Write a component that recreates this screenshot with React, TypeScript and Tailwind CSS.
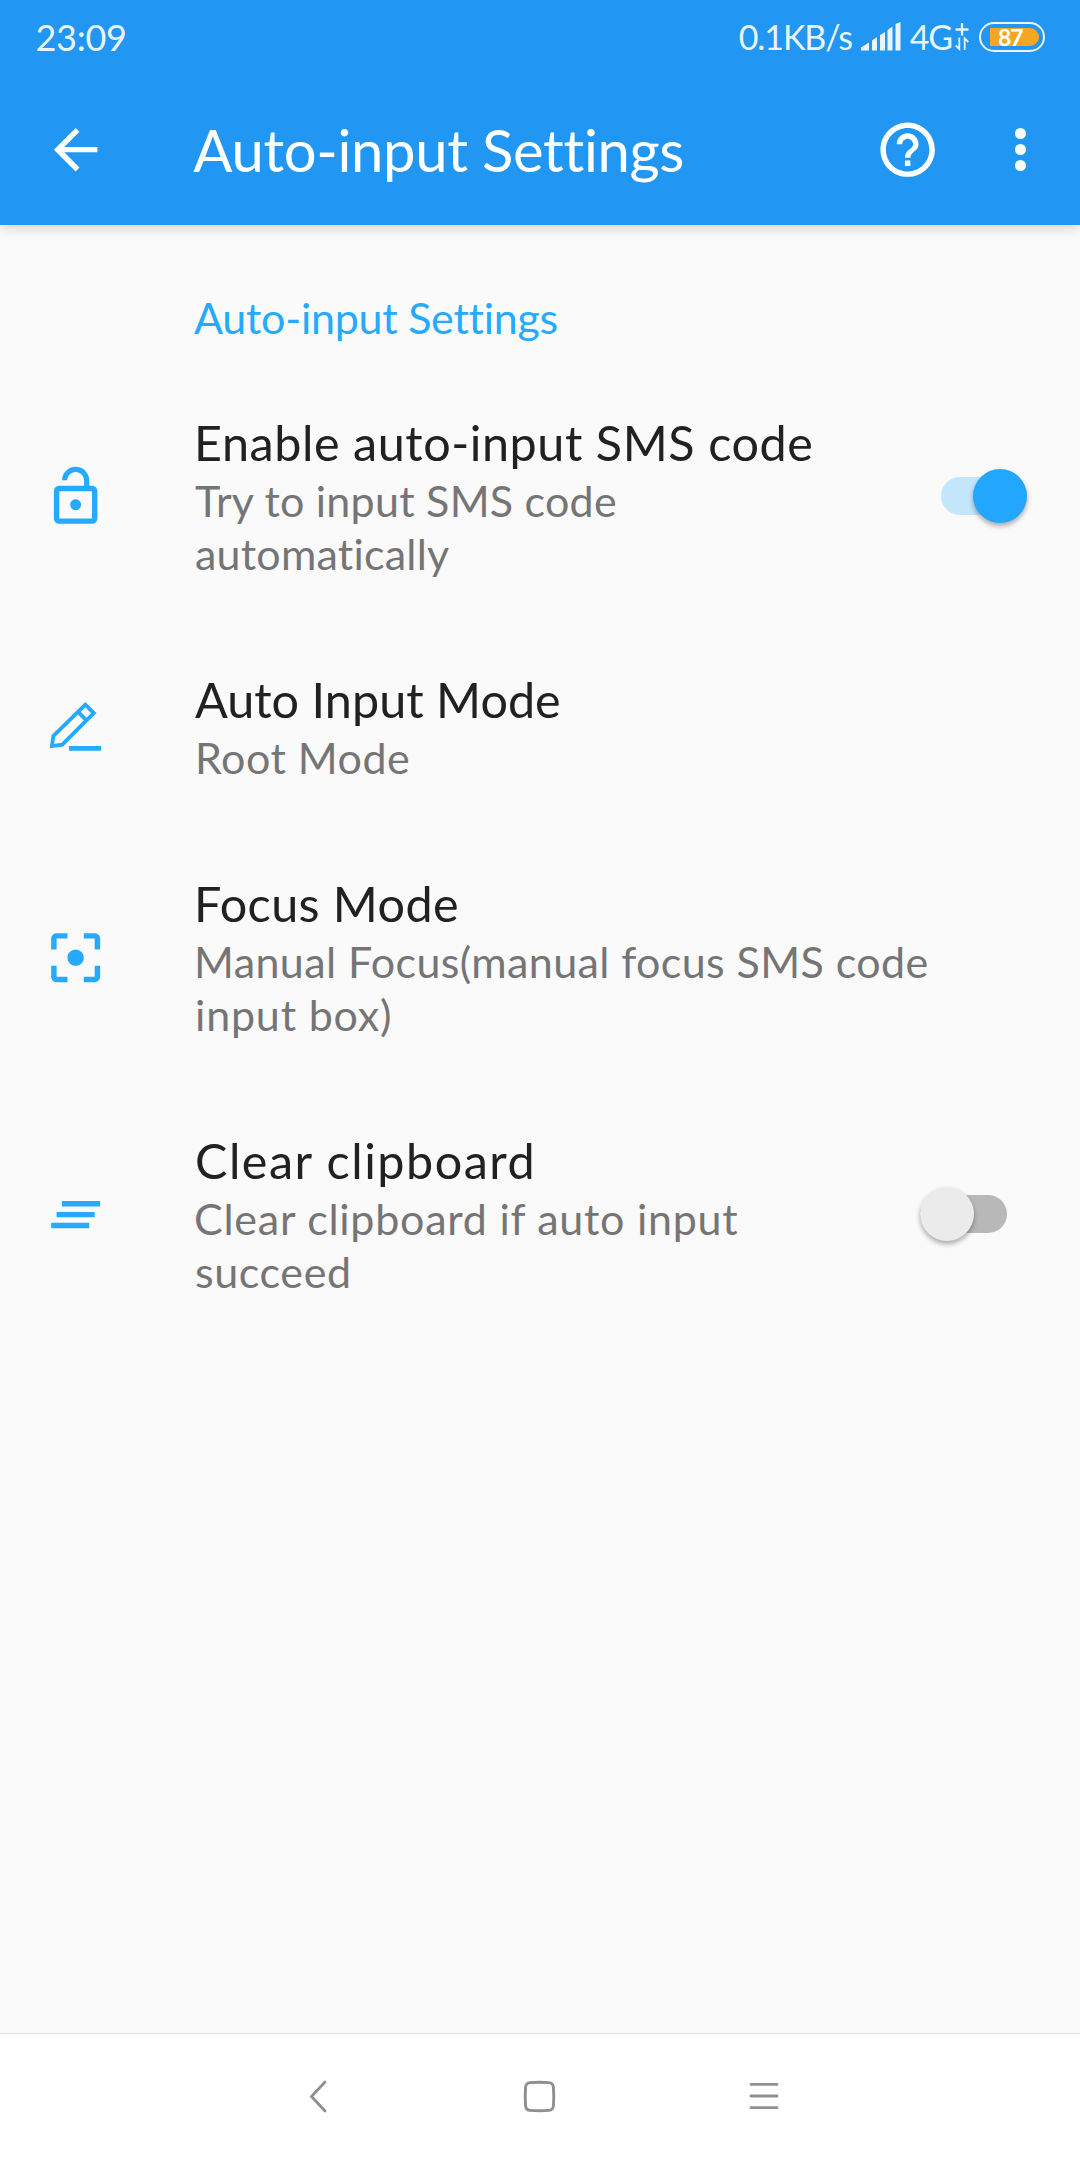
import React from "react";

type Line = { text: string; className: string };

type Item = {
  icon: React.ReactNode;
  title: Line;
  summary: Line[];
  height: string;
  checked?: boolean;
};

function MaterialIcon({ d, className }: { d: string; className: string }) {
  return (
    <svg viewBox="0 0 24 24" fill="currentColor" className={className}>
      <path d={d} />
    </svg>
  );
}

const HELP =
  "M11 18h2v-2h-2v2zm1-16C6.48 2 2 6.48 2 12s4.48 10 10 10 10-4.48 10-10S17.52 2 12 2zm0 18c-4.41 0-8-3.59-8-8s3.59-8 8-8 8 3.59 8 8-3.59 8-8 8zm0-14c-2.21 0-4 1.79-4 4h2c0-1.1.9-2 2-2s2 .9 2 2c0 2-3 1.75-3 5h2c0-2.25 3-2.5 3-5 0-2.21-1.79-4-4-4z";
const ARROW_BACK = "M20 11H7.83l5.59-5.59L12 4l-8 8 8 8 1.41-1.41L7.83 13H20v-2z";
const LOCK_OPEN =
  "M12 17c1.1 0 2-.9 2-2s-.9-2-2-2-2 .9-2 2 .9 2 2 2zm6-9h-1V6c0-2.76-2.24-5-5-5S7 3.24 7 6h1.9c0-1.71 1.39-3.1 3.1-3.1s3.1 1.39 3.1 3.1v2H6c-1.1 0-2 .9-2 2v10c0 1.1.9 2 2 2h12c1.1 0 2-.9 2-2V10c0-1.1-.9-2-2-2zm0 12H6V10h12v10z";
const FOCUS =
  "M5 15H3v4c0 1.1.9 2 2 2h4v-2H5v-4zM5 5h4V3H5c-1.1 0-2 .9-2 2v4h2V5zm14-2h-4v2h4v4h2V5c0-1.1-.9-2-2-2zm0 16h-4v2h4c1.1 0 2-.9 2-2v-4h-2v4zM12 9c-1.66 0-3 1.34-3 3s1.34 3 3 3 3-1.34 3-3-1.34-3-3-3z";
const CLEAR_ALL = "M5 13h14v-2H5v2zm-2 4h14v-2H3v2zM7 7v2h14V7H7z";

const rowIcon = "size-[65.3px]";

function PencilIcon() {
  return (
    <svg viewBox="0 0 65.3 65.3" fill="none" stroke="currentColor" className={rowIcon}>
      <path d="M42.3 10.6 50.8 19.1 19.3 50.7 8.9 52.1 10.4 42Z M35.3 18.1 43.5 26.3" strokeWidth="3.8" />
      <path d="M26 54.3H58" strokeWidth="4.8" />
    </svg>
  );
}

const items: Item[] = [
  {
    icon: <MaterialIcon d={LOCK_OPEN} className={rowIcon} />,
    title: { text: "Enable auto-input SMS code", className: "-ml-px tracking-[0.56px]" },
    summary: [
      { text: "Try to input SMS code", className: "tracking-[0.24px]" },
      { text: "automatically", className: "tracking-[0.22px]" },
    ],
    height: "h-[257px]",
    checked: true,
  },
  {
    icon: <PencilIcon />,
    title: { text: "Auto Input Mode", className: "tracking-[0.03px]" },
    summary: [{ text: "Root Mode", className: "tracking-[0.49px]" }],
    height: "h-[204px]",
  },
  {
    icon: <MaterialIcon d={FOCUS} className={rowIcon} />,
    title: { text: "Focus Mode", className: "-ml-px tracking-[0.4px]" },
    summary: [
      { text: "Manual Focus(manual focus SMS code", className: "-ml-px tracking-[0.39px]" },
      { text: "input box)", className: "tracking-[0.81px]" },
    ],
    height: "h-[257px]",
  },
  {
    icon: <MaterialIcon d={CLEAR_ALL} className={rowIcon} />,
    title: { text: "Clear clipboard", className: "tracking-[1.5px]" },
    summary: [
      { text: "Clear clipboard if auto input", className: "-ml-px tracking-[0.74px]" },
      { text: "succeed", className: "tracking-[0.62px]" },
    ],
    height: "h-[257px]",
    checked: false,
  },
];

function Toggle({ on }: { on: boolean }) {
  return on ? (
    <div className="mb-[2px] mr-[53px] flex h-[38px] w-[86px] items-center justify-end rounded-full bg-[#c3e6fb]">
      <div className="size-[54px] shrink-0 rounded-full bg-[#23a7fe] shadow-[0_3px_5px_rgba(0,0,0,0.32)]" />
    </div>
  ) : (
    <div className="mb-[2px] mr-[73px] flex h-[38px] w-[87px] items-center rounded-full bg-[#b8b8b8]">
      <div className="size-[54px] shrink-0 rounded-full bg-[#ebebeb] shadow-[0_3px_5px_rgba(0,0,0,0.32)]" />
    </div>
  );
}

function Row({ item }: { item: Item }) {
  return (
    <div className={`flex ${item.height}`}>
      <div className="flex w-[195px] shrink-0 items-center pl-[43px] text-[#25aaff]">{item.icon}</div>
      <div className="flex-1 whitespace-nowrap pt-[42px]">
        <div className={`text-[48.5px] leading-[64px] text-[#212121] ${item.title.className}`}>{item.title.text}</div>
        {item.summary.map((s) => (
          <div key={s.text} className={`text-[43px] leading-[53px] text-[#757575] ${s.className}`}>
            {s.text}
          </div>
        ))}
      </div>
      {item.checked !== undefined && (
        <div className="flex items-center">
          <Toggle on={item.checked} />
        </div>
      )}
    </div>
  );
}

function StatusBar() {
  return (
    <div className="flex h-[75px] items-center justify-between pl-[35.5px] pr-[35px] text-[#e9f4fe]">
      <span className="text-[36px] leading-[72px] tracking-[-0.28px] -mt-[2px]">23:09</span>
      <div className="flex h-full items-center">
        <span className="-mt-[2px] text-[34px] leading-[72px] tracking-[-1.1px]">0.1KB/s</span>
        <svg viewBox="0 0 40 29" fill="currentColor" className="-mt-[2px] ml-[9px] h-[29px] w-[40px]">
          <path d="M0 28.5V25.5L8 20.5V28.5ZM11 28.5V18.5L16 15V28.5ZM19 28.5V13L24 10V28.5ZM26.5 28.5V8L31.5 4.5V28.5ZM34.5 28.5V2L39.5 0V28.5Z" />
        </svg>
        <span className="-mt-[2px] ml-[9px] text-[34px] leading-[72px] tracking-[-1.2px]">4G</span>
        <svg viewBox="0 0 14 28" fill="none" stroke="currentColor" className="-mt-[2px] ml-[3px] mr-px h-[28px] w-[14px]">
          <path d="M7 0V12.5M.5 6.5H13.5" strokeWidth="2.3" />
          <path d="M4.3 14.5V26L.7 22.5M9.7 27V15.5L13.3 19" strokeWidth="1.8" />
        </svg>
        <div className="-mt-[2px] ml-[9px] flex h-[30px] w-[66px] items-center rounded-full border-[2.5px] border-current pl-[9px]">
          <div className="flex h-[18px] w-[49px] items-center rounded-l-[2px] rounded-r-full bg-[#f5a623] pl-[8px] text-[23px] font-bold leading-[18px] tracking-[-1px] text-white">
            87
          </div>
        </div>
      </div>
    </div>
  );
}

export default function App() {
  return (
    <div className="flex h-[2160px] w-[1080px] flex-col overflow-hidden bg-[#fafafa] font-['Lato','Noto_Sans',sans-serif]">
      <header className="h-[225px] shrink-0 bg-[#2196f3] shadow-[0_2px_12px_rgba(0,0,0,0.18)]">
        <StatusBar />
        <div className="flex h-[149px] items-center pl-[43px] text-white">
          <MaterialIcon d={ARROW_BACK} className="size-[65.3px]" />
          <h1 className="ml-[85px] flex-1 whitespace-nowrap text-[58px] leading-[149px] tracking-[-0.36px]">
            Auto-input Settings
          </h1>
          <MaterialIcon d={HELP} className="size-[65.3px]" />
          <div className="ml-[74.5px] mr-[54px] flex flex-col gap-[5.3px]">
            <i className="size-[11px] rounded-full bg-white" />
            <i className="size-[11px] rounded-full bg-white" />
            <i className="size-[11px] rounded-full bg-white" />
          </div>
        </div>
      </header>

      <main className="flex-1">
        <h2 className="h-[143px] whitespace-nowrap pl-[194px] pt-[63px] text-[43px] leading-[60px] tracking-[-0.26px] text-[#25aaff]">
          Auto-input Settings
        </h2>
        {items.map((item) => (
          <Row key={item.title.text} item={item} />
        ))}
      </main>

      <nav className="flex h-[127px] shrink-0 items-center border-t border-[#e0e0e0] bg-white pb-[2px] pl-[309px] text-[#8f8f8f]">
        <svg viewBox="0 0 18 33" fill="none" stroke="currentColor" strokeLinecap="round" className="h-[33px] w-[18px]">
          <path d="M16 2 2.5 16.5 16 31" strokeWidth="2.8" />
        </svg>
        <svg viewBox="0 0 33 33" fill="none" stroke="currentColor" className="ml-[196px] h-[33px] w-[33px]">
          <path
            d="M7 2.6Q16.5 1.8 26 2.6 30 3 30.4 7 31.2 16.5 30.4 26 30 30 26 30.4 16.5 31.2 7 30.4 3 30 2.6 26 1.8 16.5 2.6 7 3 3 7 2.6Z"
            strokeWidth="2.9"
          />
        </svg>
        <svg viewBox="0 0 30 28" fill="none" stroke="currentColor" strokeLinecap="round" className="ml-[193px] h-[28px] w-[30px]">
          <path d="M2 2.3H28M2 14H28M2 25.7H28" strokeWidth="2.8" />
        </svg>
      </nav>
    </div>
  );
}
